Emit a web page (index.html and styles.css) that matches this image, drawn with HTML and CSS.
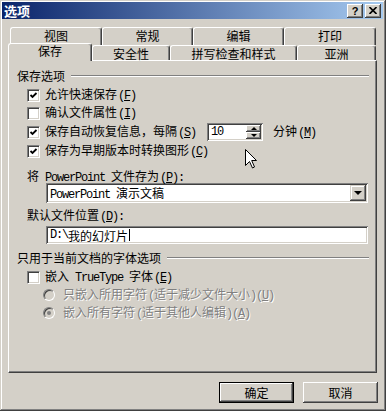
FILE: index.html
```html
<!DOCTYPE html>
<html lang="zh-CN">
  <head>
    <meta charset="UTF-8" />
    <meta name="viewport" content="width=device-width, initial-scale=1.0" />
    <title>选项</title>
    <link rel="stylesheet" href="styles.css">
  </head>
  <body>
    <div class="window">
      <div class="titlebar">
        <span class="title">选项</span>
        <div class="caption-buttons">
          <span class="cap-btn help">?</span>
          <span class="cap-btn close">
            <svg width="8" height="7" viewBox="0 0 8 7"><path d="M0.5 0 L7.5 7 M7.5 0 L0.5 7" stroke="#000" stroke-width="1.6"/></svg>
          </span>
        </div>
      </div>

      <div class="tabs">
        <div class="tab-row back">
          <div class="tab">视图</div>
          <div class="tab">常规</div>
          <div class="tab">编辑</div>
          <div class="tab">打印</div>
        </div>
        <div class="tab-row front">
          <div class="tab active">保存</div>
          <div class="tab">安全性</div>
          <div class="tab">拼写检查和样式</div>
          <div class="tab">亚洲</div>
        </div>
      </div>

      <div class="panel">
        <div class="group-title"><span>保存选项</span><span class="rule"></span></div>

        <div class="check-row r1">
          <span class="checkbox"><svg width="9" height="9" viewBox="0 0 9 9"><path d="M1.5 4 L3.5 6 L7.5 2" fill="none" stroke="#000" stroke-width="1.8"/></svg></span>
          <span>允许快速保存<span class="en key">(<u>F</u>)</span></span>
        </div>
        <div class="check-row r2">
          <span class="checkbox"></span>
          <span>确认文件属性<span class="en key">(<u>I</u>)</span></span>
        </div>
        <div class="check-row r3">
          <span class="checkbox"><svg width="9" height="9" viewBox="0 0 9 9"><path d="M1.5 4 L3.5 6 L7.5 2" fill="none" stroke="#000" stroke-width="1.8"/></svg></span>
          <span>保存自动恢复信息，每隔<span class="en key">(<u>S</u>)</span></span>
          <div class="spin field">
            <span class="en spin-value">10</span>
            <div class="spin-btns">
              <span class="spin-btn"><span class="tri-up"></span></span>
              <span class="spin-btn"><span class="tri-down"></span></span>
            </div>
          </div>
          <span class="unit">分钟<span class="en key">(<u>M</u>)</span></span>
        </div>
        <div class="check-row r4">
          <span class="checkbox"><svg width="9" height="9" viewBox="0 0 9 9"><path d="M1.5 4 L3.5 6 L7.5 2" fill="none" stroke="#000" stroke-width="1.8"/></svg></span>
          <span>保存为早期版本时转换图形<span class="en key">(<u>C</u>)</span></span>
        </div>

        <div class="field-label first">将<span class="en"> PowerPoint </span>文件存为<span class="en key">(<u>P</u>):</span></div>
        <div class="select field">
          <span class="select-text"><span class="en">PowerPoint </span>演示文稿</span>
          <span class="drop-btn"><span class="tri-down big"></span></span>
        </div>

        <div class="field-label second">默认文件位置<span class="en key">(<u>D</u>):</span></div>
        <div class="textbox field"><span class="en">D:\</span>我的幻灯片<span class="caret"></span></div>

        <div class="group-title second"><span>只用于当前文档的字体选项</span><span class="rule"></span></div>

        <div class="check-row embed">
          <span class="checkbox"></span>
          <span>嵌入<span class="en"> TrueType </span>字体<span class="en key">(<u>E</u>)</span></span>
        </div>
        <div class="radio-row disabled">
          <span class="radio"></span>
          <span>只嵌入所用字符<span class="en key">(</span>适于减少文件大小<span class="en">)(<u>U</u>)</span></span>
        </div>
        <div class="radio-row disabled">
          <span class="radio on"></span>
          <span>嵌入所有字符<span class="en key">(</span>适于其他人编辑<span class="en">)(<u>A</u>)</span></span>
        </div>
      </div>

      <div class="footer">
        <span class="btn default">确定</span>
        <span class="btn">取消</span>
      </div>

      <svg class="cursor" width="13" height="20" viewBox="0 0 13 20">
        <path d="M0.5 0.5 V16.5 L4.5 12.5 L7.5 19 L9.5 18 L6.7 11.5 H11.5 Z" fill="#fff" stroke="#000" stroke-width="1"/>
      </svg>
    </div>
  </body>
</html>
```

FILE: styles.css
```css
* {
  box-sizing: border-box;
}

body {
  margin: 0;
  background-color: #d4d0c8;
  font-family: "Noto Sans CJK SC", sans-serif;
  font-size: 12px;
  color: #000;
}

.window {
  position: relative;
  width: 386px;
  height: 411px;
  padding: 2px 3px 3px 2px;
  background-color: #d4d0c8;
  box-shadow: inset -1px -1px #404040, inset 1px 1px #d4d0c8,
    inset -2px -2px #808080, inset 2px 2px #fff;
}

.en {
  font-family: "Liberation Mono", monospace;
  font-size: 12px;
  letter-spacing: -1.2px;
}

.key {
  margin-left: 1px;
}

/* title bar */
.titlebar {
  height: 17px;
  display: flex;
  align-items: center;
  justify-content: space-between;
  padding: 0 2px;
  background: linear-gradient(to right, #0a246a, #a6caf0);
}

.title {
  color: #fff;
  font-weight: bold;
  font-size: 13px;
  line-height: 17px;
}

.caption-buttons {
  display: flex;
  gap: 2px;
}

.cap-btn {
  width: 16px;
  height: 14px;
  display: flex;
  align-items: center;
  justify-content: center;
  background-color: #d4d0c8;
  font: bold 11px "Liberation Sans", sans-serif;
  box-shadow: inset -1px -1px #404040, inset 1px 1px #fff,
    inset -2px -2px #808080, inset 2px 2px #d4d0c8;
}

/* tabs */
.tabs {
  margin: 8px 0 0 6px;
}

.tab-row {
  display: grid;
}

.tab-row.back {
  grid-template-columns: 92px 91px 91px 92px;
  margin-left: 2px;
  height: 18px;
}

.tab-row.front {
  grid-template-columns: 84px 78px 127px 79px;
  height: 17px;
  margin-top: -2px;
  align-items: end;
}

.tab {
  text-align: center;
  line-height: 13px;
  padding-top: 1px;
  background-color: #d4d0c8;
  border: 1px solid;
  border-color: #fff #404040 transparent #fff;
  border-bottom: 0;
  border-radius: 3px 3px 0 0;
  box-shadow: inset -1px 0 #808080;
}

.back .tab {
  height: 18px;
}

.front .tab {
  height: 15px;
  padding-top: 1px;
}

.front .tab.active {
  height: 18px;
  margin-bottom: -1px;
  z-index: 1;
  padding-top: 0;
}

/* panel */
.panel {
  margin-left: 6px;
  width: 369px;
  height: 313px;
  padding: 8px 7px 0 8px;
  border: 1px solid;
  border-color: #fff #404040 #404040 #fff;
  box-shadow: inset -1px -1px #808080;
}

.group-title {
  display: flex;
  align-items: center;
  height: 13px;
  line-height: 13px;
}

.group-title.second {
  margin-top: 7px;
}

.rule {
  flex: 1;
  margin-left: 6px;
  border-top: 1px solid #808080;
  border-bottom: 1px solid #fff;
}

.check-row {
  display: flex;
  align-items: center;
  gap: 5px;
  padding-left: 10px;
  height: 18px;
  line-height: 13px;
}

.check-row.r1 {
  margin-top: 4px;
}

.check-row.r3 {
  height: 20px;
}

.check-row.embed {
  margin-top: 4px;
}

.checkbox {
  width: 13px;
  height: 13px;
  flex: none;
  display: flex;
  align-items: center;
  justify-content: center;
  background-color: #fff;
  border: 1px solid;
  border-color: #808080 #fff #fff #808080;
  box-shadow: inset 1px 1px #404040, inset -1px -1px #d4d0c8;
}

.field {
  background-color: #fff;
  box-shadow: inset 1px 1px #808080, inset -1px -1px #fff,
    inset 2px 2px #404040, inset -2px -2px #d4d0c8;
}

/* spinner */
.spin {
  margin-left: 6px;
  width: 56px;
  height: 18px;
  display: flex;
  align-items: center;
  padding: 2px;
}

.spin-value {
  flex: 1;
  padding-left: 2px;
}

.spin-btns {
  display: flex;
  flex-direction: column;
  width: 15px;
  height: 14px;
}

.spin-btn {
  flex: 1;
  display: flex;
  align-items: center;
  justify-content: center;
  background-color: #d4d0c8;
  box-shadow: inset -1px -1px #404040, inset 1px 1px #fff,
    inset -2px -2px #808080;
}

.tri-up,
.tri-down {
  width: 0;
  height: 0;
  border-left: 3px solid transparent;
  border-right: 3px solid transparent;
}

.tri-up {
  border-bottom: 3px solid #000;
}

.tri-down {
  border-top: 3px solid #000;
}

.tri-down.big {
  border-left-width: 4px;
  border-right-width: 4px;
  border-top-width: 4px;
}

.unit {
  margin-left: 5px;
}

/* fields */
.field-label {
  padding-left: 10px;
  height: 13px;
  line-height: 13px;
}

.field-label.first {
  margin-top: 9px;
}

.field-label.second {
  margin-top: 5px;
}

.select {
  margin: 1px 0 0 29px;
  width: 322px;
  height: 20px;
  display: flex;
  align-items: center;
  padding: 2px;
}

.select-text {
  flex: 1;
  padding-left: 2px;
}

.drop-btn {
  width: 16px;
  height: 16px;
  display: flex;
  align-items: center;
  justify-content: center;
  background-color: #d4d0c8;
  box-shadow: inset -1px -1px #404040, inset 1px 1px #d4d0c8,
    inset -2px -2px #808080, inset 2px 2px #fff;
}

.textbox {
  margin: 5px 0 0 29px;
  width: 322px;
  height: 18px;
  padding: 0 4px;
  display: flex;
  align-items: center;
}

.caret {
  width: 1px;
  height: 12px;
  margin-left: 1px;
  background-color: #000;
}

/* radios */
.radio-row {
  display: flex;
  align-items: center;
  gap: 8px;
  padding-left: 26px;
  height: 18px;
  line-height: 13px;
}

.disabled {
  color: #808080;
  text-shadow: 1px 1px #fff;
}

.radio {
  width: 12px;
  height: 12px;
  flex: none;
  display: flex;
  align-items: center;
  justify-content: center;
  border-radius: 50%;
  background-color: #d4d0c8;
  border: 1px solid;
  border-color: #808080 #fff #fff #808080;
  box-shadow: inset 1px 1px #404040;
}

.radio.on::after {
  content: "";
  width: 4px;
  height: 4px;
  border-radius: 50%;
  background-color: #808080;
}

/* buttons */
.footer {
  display: flex;
  justify-content: flex-end;
  gap: 9px;
  margin-top: 9px;
  padding-right: 5px;
}

.btn {
  width: 75px;
  height: 21px;
  line-height: 21px;
  text-align: center;
  box-shadow: inset -1px -1px #404040, inset 1px 1px #fff,
    inset -2px -2px #808080, inset 2px 2px #d4d0c8;
}

.btn.default {
  line-height: 19px;
  border: 1px solid #000;
}

.cursor {
  position: absolute;
  left: 245px;
  top: 149px;
}
```
